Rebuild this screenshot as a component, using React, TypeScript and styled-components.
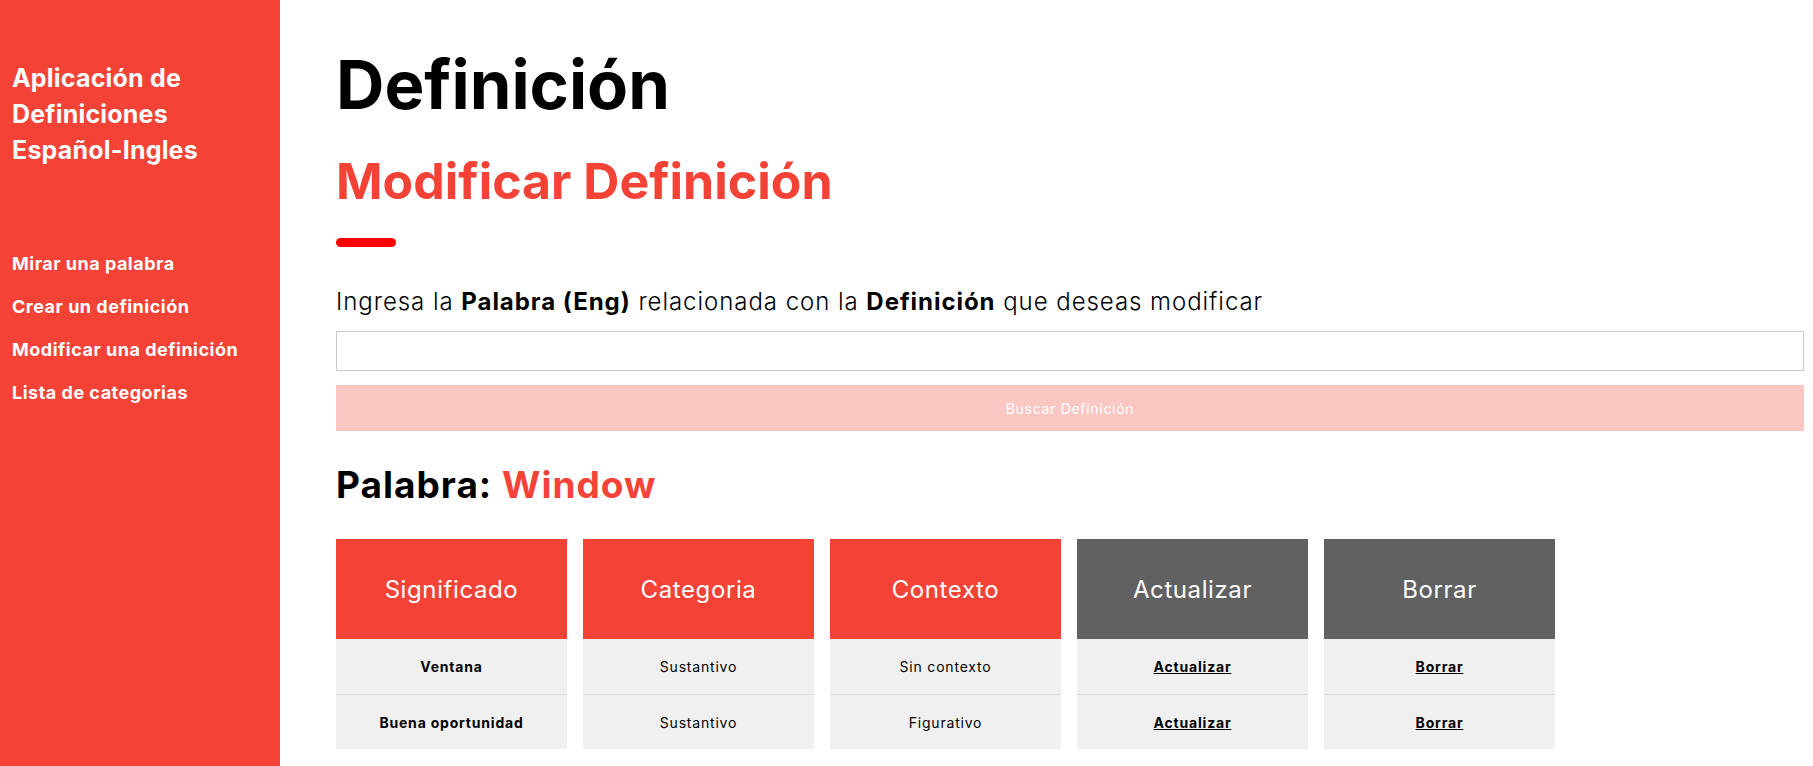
import React from "react";
import styled, { createGlobalStyle } from "styled-components";

const GlobalStyle = createGlobalStyle`
  html, body {
    margin: 0;
    padding: 0;
    background: #ffffff;
    font-family: "Inter", "Noto Sans", sans-serif;
  }
  * { box-sizing: border-box; }
`;

const Layout = styled.div`
  display: flex;
  min-height: 766px;
`;

const Sidebar = styled.aside`
  width: 280px;
  flex: 0 0 280px;
  background: #f44336;
  color: #ffffff;
  padding: 60px 12px 0 12px;
  display: flex;
  flex-direction: column;
`;

const Brand = styled.h1`
  margin: 0;
  font-size: 25px;
  line-height: 36px;
  font-weight: 700;
  letter-spacing: 0.2px;
`;

const Nav = styled.nav`
  margin-top: 85px;
  display: flex;
  flex-direction: column;
  gap: 21px;
`;

const NavLink = styled.a`
  color: #ffffff;
  text-decoration: none;
  font-size: 18px;
  line-height: 22px;
  font-weight: 700;
  letter-spacing: 0.5px;
`;

const Main = styled.main`
  flex: 1;
  padding: 40px 9px 0 56px;
  display: flex;
  flex-direction: column;
`;

const PageTitle = styled.h1`
  margin: 0;
  font-size: 67px;
  line-height: 90px;
  font-weight: 700;
  color: #000;
`;

const SubTitle = styled.h2`
  margin: 16px 0 0;
  font-size: 50px;
  line-height: 70px;
  font-weight: 700;
  color: #f44336;
`;

const Accent = styled.div`
  width: 60px;
  height: 9px;
  border-radius: 5px;
  background: #ff0000;
  margin-top: 22px;
`;

const Prompt = styled.p`
  margin: 39px 0 0;
  font-size: 24px;
  line-height: 32px;
  font-weight: 300;
  letter-spacing: 0.95px;
  color: #000;
  b { font-weight: 700; }
`;

const SearchInput = styled.input`
  margin-top: 13px;
  height: 40px;
  width: 100%;
  border: 1px solid #cccccc;
  background: #fff;
  outline: none;
`;

const SearchButton = styled.button`
  margin-top: 14px;
  height: 46px;
  width: 100%;
  border: none;
  background: #fbc7c3;
  color: #ffffff;
  font-family: inherit;
  font-size: 14px;
  font-weight: 400;
  letter-spacing: 0.7px;
`;

const WordTitle = styled.h3`
  margin: 32px 0 0;
  font-size: 37px;
  line-height: 44px;
  font-weight: 700;
  letter-spacing: 1px;
  color: #000;
  span { color: #f44336; }
`;

const Columns = styled.div`
  margin-top: 32px;
  display: flex;
  gap: 16px;
`;

const Column = styled.div`
  width: 231px;
  display: flex;
  flex-direction: column;
`;

const Head = styled.div<{ $dark?: boolean }>`
  height: 100px;
  background: ${(p) => (p.$dark ? "#616161" : "#f44336")};
  color: #fff;
  font-size: 24px;
  font-weight: 400;
  letter-spacing: 0.6px;
  display: flex;
  align-items: center;
  justify-content: center;
`;

const Cell = styled.div<{ $bold?: boolean }>`
  height: 55px;
  background: #f0f0f0;
  display: flex;
  align-items: center;
  justify-content: center;
  font-size: 14px;
  letter-spacing: 0.8px;
  font-weight: ${(p) => (p.$bold ? 700 : 400)};
  color: #000;
  & + & { border-top: 1px solid #dddddd; }
`;

const CellLink = styled.a`
  color: #000;
  font-weight: 700;
  text-decoration: underline;
`;

const rows = [
  { sig: "Ventana", cat: "Sustantivo", ctx: "Sin contexto" },
  { sig: "Buena oportunidad", cat: "Sustantivo", ctx: "Figurativo" },
];

export default function App() {
  return (
    <>
      <GlobalStyle />
      <Layout>
        <Sidebar>
          <Brand>
            Aplicación de
            <br />
            Definiciones
            <br />
            Español-Ingles
          </Brand>
          <Nav>
            <NavLink href="#">Mirar una palabra</NavLink>
            <NavLink href="#">Crear un definición</NavLink>
            <NavLink href="#">Modificar una definición</NavLink>
            <NavLink href="#">Lista de categorias</NavLink>
          </Nav>
        </Sidebar>
        <Main>
          <PageTitle>Definición</PageTitle>
          <SubTitle>Modificar Definición</SubTitle>
          <Accent />
          <Prompt>
            Ingresa la <b>Palabra (Eng)</b> relacionada con la <b>Definición</b> que deseas modificar
          </Prompt>
          <SearchInput type="text" />
          <SearchButton>Buscar Definición</SearchButton>
          <WordTitle>
            Palabra: <span>Window</span>
          </WordTitle>
          <Columns>
            <Column>
              <Head>Significado</Head>
              {rows.map((r) => (
                <Cell key={r.sig} $bold>{r.sig}</Cell>
              ))}
            </Column>
            <Column>
              <Head>Categoria</Head>
              {rows.map((r) => (
                <Cell key={r.sig}>{r.cat}</Cell>
              ))}
            </Column>
            <Column>
              <Head>Contexto</Head>
              {rows.map((r) => (
                <Cell key={r.sig}>{r.ctx}</Cell>
              ))}
            </Column>
            <Column>
              <Head $dark>Actualizar</Head>
              {rows.map((r) => (
                <Cell key={r.sig}>
                  <CellLink href="#">Actualizar</CellLink>
                </Cell>
              ))}
            </Column>
            <Column>
              <Head $dark>Borrar</Head>
              {rows.map((r) => (
                <Cell key={r.sig}>
                  <CellLink href="#">Borrar</CellLink>
                </Cell>
              ))}
            </Column>
          </Columns>
        </Main>
      </Layout>
    </>
  );
}
